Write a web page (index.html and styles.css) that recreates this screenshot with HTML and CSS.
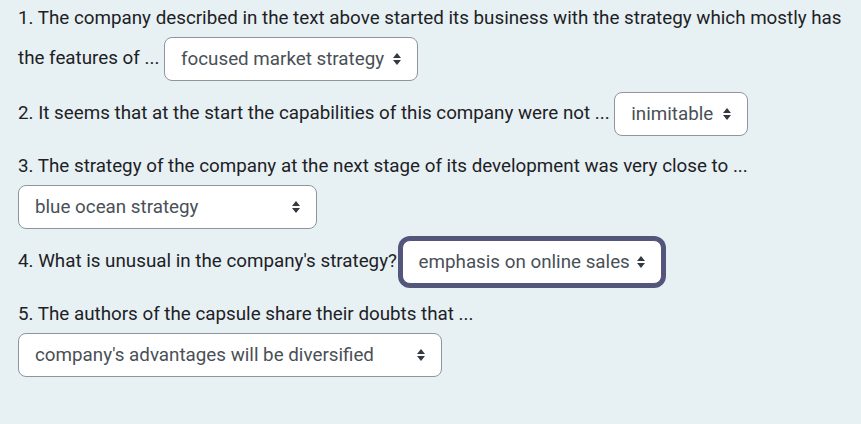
FILE: index.html
```html
<!DOCTYPE html>
<html lang="en">
<head>
<meta charset="utf-8">
<title>Quiz</title>
<link rel="stylesheet" href="styles.css">
</head>
<body>
<div class="que">
  <p class="q">1. The company described in the text above started its business with the strategy which mostly has the features of ... <span class="sel w1"><span class="val">focused market strategy</span><svg class="arr" viewBox="0 0 8 12" width="8" height="12"><path d="M4 0 L8 5 L0 5 Z M0 7 L8 7 L4 12 Z"/></svg></span></p>
  <p class="q">2. It seems that at the start the capabilities of this company were not ... <span class="sel w2"><span class="val">inimitable</span><svg class="arr" viewBox="0 0 8 12" width="8" height="12"><path d="M4 0 L8 5 L0 5 Z M0 7 L8 7 L4 12 Z"/></svg></span></p>
  <p class="q">3. The strategy of the company at the next stage of its development was very close to ...<br><span class="sel w3"><span class="val">blue ocean strategy</span><svg class="arr" viewBox="0 0 8 12" width="8" height="12"><path d="M4 0 L8 5 L0 5 Z M0 7 L8 7 L4 12 Z"/></svg></span></p>
  <p class="q">4. What is unusual in the company's strategy? <span class="sel w4 focus"><span class="val">emphasis on online sales</span><svg class="arr" viewBox="0 0 8 12" width="8" height="12"><path d="M4 0 L8 5 L0 5 Z M0 7 L8 7 L4 12 Z"/></svg></span></p>
  <p class="q">5. The authors of the capsule share their doubts that ...<br><span class="sel w5"><span class="val">company's advantages will be diversified</span><svg class="arr" viewBox="0 0 8 12" width="8" height="12"><path d="M4 0 L8 5 L0 5 Z M0 7 L8 7 L4 12 Z"/></svg></span></p>
</div>
</body>
</html>
```

FILE: styles.css
```css
html, body {
  margin: 0;
  padding: 0;
  background: #e7f1f4;
}
body {
  width: 861px;
  height: 424px;
  overflow: hidden;
}
.que {
  padding: 0 18px;
  font-family: Roboto, "Liberation Sans", sans-serif;
  font-size: 18.8px;
  color: #1d2125;
}
.q {
  margin: 0 0 11px;
  line-height: 38px;
}
.q:first-child {
  margin-top: -1px;
}
.sel {
  display: inline-flex;
  align-items: center;
  justify-content: space-between;
  box-sizing: border-box;
  height: 44px;
  padding: 0 16px;
  vertical-align: middle;
  background: #fff;
  border: 1px solid #8f959e;
  border-radius: 8px;
  color: #495057;
  line-height: 1;
}
.arr {
  fill: #343a40;
  flex: none;
}
.w1 { width: 254px; }
.w2 { width: 134px; }
.w3 { width: 299px; }
.w4 { width: 260px; }
.w5 { width: 424px; }
.focus {
  border-color: #54557a;
  box-shadow: 0 0 0 4px #54557a;
}
```
